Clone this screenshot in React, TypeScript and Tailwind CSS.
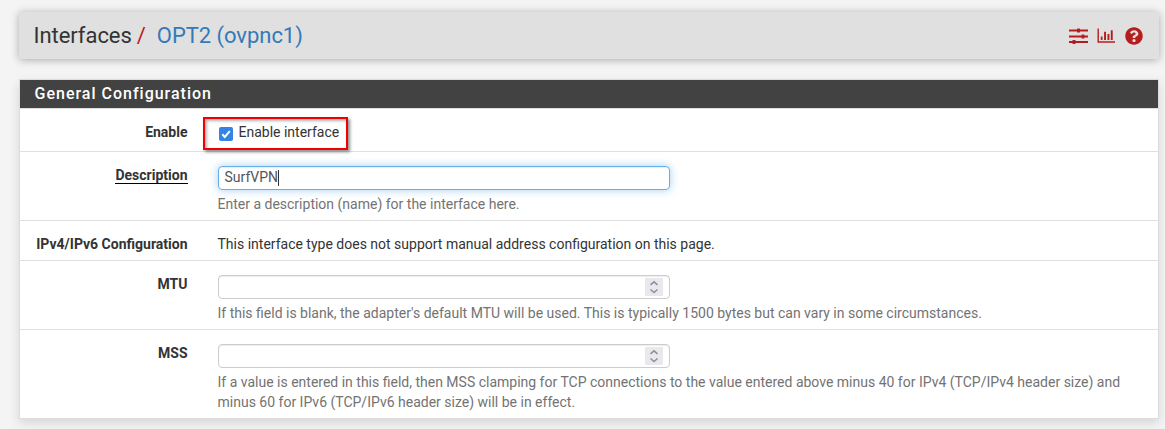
import React from 'react';
import { FaQuestionCircle } from 'react-icons/fa';

function SlidersIcon() {
  return (
    <svg className="h-4 w-[19px]" viewBox="0 0 19 16" fill="#b71c1c">
      <path d="M0 1.500h19v2H0zM0 7.500h19v2H0zM0 13h19v2H0z" />
      <rect x="8" y="0.500" width="3" height="4" rx="0.600" />
      <rect x="12.500" y="6.500" width="3" height="4" rx="0.600" />
      <rect x="3.500" y="12" width="3" height="4" rx="0.600" />
    </svg>
  );
}

function ChartIcon() {
  return (
    <svg className="h-[15px] w-[18px]" viewBox="0 0 18 15" fill="#b71c1c">
      <path d="M0.500 0.500h1.400v12.800H18V14.800H0.500zM3.800 8.500h1.700v3.500H3.800zM7.100 3.700h1.900v8.300H7.100zM10.500 6h1.900v6h-1.900zM13.800 2.200h1.900v9.800h-1.900z" />
    </svg>
  );
}

function Row({ label, className, labelClass = '', children }: { label: string; className: string; labelClass?: string; children: React.ReactNode }) {
  return (
    <div className={`flex border-t border-[#e0e0e0] ${className}`}>
      <div className="w-[167.5px] shrink-0 text-right font-bold">
        <span className={labelClass}>{label}</span>
      </div>
      <div className="ml-[30px] min-w-0 flex-1">{children}</div>
    </div>
  );
}

function NumberField() {
  return (
    <div className="flex h-6 w-[452px] items-center justify-end rounded border border-[#ccc] bg-white pr-1.5 shadow-[inset_0_1px_1px_rgba(0,0,0,0.075)]">
      <svg className="h-[18px] w-[18px] bg-[#e9e9ed]" viewBox="0 0 18 18" fill="none" stroke="#8f8f9d" strokeWidth="1.600">
        <path d="M5.500 6.800 9 3.800l3.500 3M5.500 11.500 9 14.500l3.500-3" />
      </svg>
    </div>
  );
}

export default function App() {
  return (
    <div className="h-[429px] overflow-hidden bg-[#f4f4f4] pt-3 pr-1.5 pl-[19px] font-[Roboto,sans-serif] text-[14px] leading-5 text-[#333]">
      <header className="flex h-[47px] items-center justify-between rounded-[2px] bg-[#e0e0e0] pr-4 pl-[14.5px] shadow-[0_1px_8px_rgba(0,0,0,0.300)]">
        <h1 className="flex text-[22px] leading-6 text-[#333]">
          <span className="tracking-[-0.05px]">Interfaces</span>
          <span className="ml-[5px] text-[#b71c1c]">/</span>
          <span className="ml-[11px] tracking-[-0.05px] text-[#337ab7]">OPT2 (ovpnc1)</span>
        </h1>
        <div className="flex items-center">
          <SlidersIcon />
          <span className="ml-[9px]"><ChartIcon /></span>
          <FaQuestionCircle className="ml-2.5 h-[18px] w-[18px] text-[#b71c1c]" />
        </div>
      </header>

      <main className="mt-5 h-[340px] border border-[#dcdcdc] bg-white shadow-[0_4px_10px_rgba(0,0,0,0.120)]">
        <h2 className="h-7 bg-[#424242] pl-[14.5px] text-[16px] leading-[27px] font-medium tracking-[1px] text-white">General Configuration</h2>
        <Row label="Enable" className="h-[43px] pt-[13px]">
          <div className="-mt-[5px] -ml-[14.5px] flex h-[33px] w-[145px] items-center border-2 border-[#f00000] pl-[14px] shadow-[2px_2px_3px_rgba(0,0,0,0.450),inset_2px_2px_3px_rgba(0,0,0,0.300)]">
            <svg className="mt-px h-[14px] w-[14px]" viewBox="0 0 14 14" fill="none">
              <rect width="14" height="14" rx="2" fill="#3584e4" />
              <path d="m3.300 7.300 2.500 2.700 5-5.800" stroke="white" strokeWidth="2" />
            </svg>
            <span className="-mt-[3px] ml-[5.5px]">Enable interface</span>
          </div>
        </Row>
        <Row label="Description" className="h-[69px] pt-[14px]" labelClass="block ml-auto w-fit -mt-px pt-[2px] border-b border-black leading-[16px]">
          <div className="flex h-6 w-[452px] items-center rounded border border-[#66afe9] pl-[6px] text-[#555] shadow-[inset_0_1px_1px_rgba(0,0,0,0.075),0_0_8px_rgba(102,175,233,0.600)]">
            <span className="-mt-[2px]">SurfVPN</span>
            <span className="h-4 w-px bg-[#333]" />
          </div>
          <p className="mt-1 text-[#737373]">Enter a description (name) for the interface here.</p>
        </Row>
        <Row label="IPv4/IPv6 Configuration" className="h-10 pt-[13px]">
          This interface type does not support manual address configuration on this page.
        </Row>
        <Row label="MTU" className="h-[69px] pt-[13px]">
          <div className="pt-px"><NumberField /></div>
          <p className="mt-1 text-[#737373]">If this field is blank, the adapter's default MTU will be used. This is typically 1500 bytes but can vary in some circumstances.</p>
        </Row>
        <Row label="MSS" className="h-[89px] pt-[13px]">
          <div className="pt-px"><NumberField /></div>
          <p className="mt-1 w-[915px] text-[#737373]">If a value is entered in this field, then MSS clamping for TCP connections to the value entered above minus 40 for IPv4 (TCP/IPv4 header size) and minus 60 for IPv6 (TCP/IPv6 header size) will be in effect.</p>
        </Row>
      </main>
    </div>
  );
}
